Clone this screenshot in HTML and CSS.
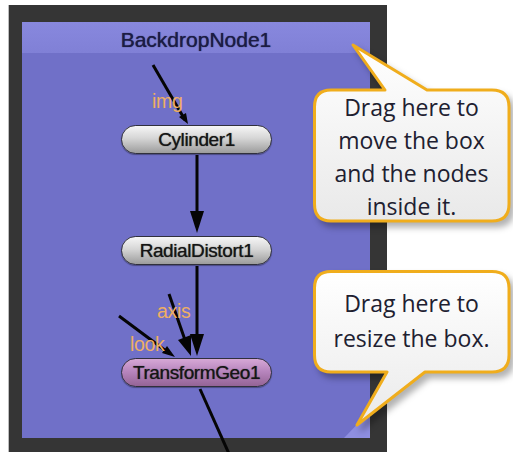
FILE: index.html
```html
<!DOCTYPE html>
<html lang="en">
<head>
  <meta charset="UTF-8">
  <title>Backdrop Node</title>
  <link rel="stylesheet" href="styles.css">
</head>
<body>
  <div class="frame">
    <div class="backdrop">
      <div class="backdrop-title">BackdropNode1</div>
      <div class="backdrop-body">
        <div class="node node-cylinder">Cylinder1</div>
        <div class="node node-radial">RadialDistort1</div>
        <div class="node node-transform">TransformGeo1</div>
      </div>
    </div>
  </div>

  <!-- wires and input labels, page coordinates -->
  <svg class="wires" width="513" height="452" viewBox="0 0 513 452">
    <polygon class="resize-corner" points="344,438 370,411 370,438"/>
    <line x1="153" y1="65" x2="185" y2="120"/>
    <polygon points="179,117 186,113 188,124"/>
    <line x1="197" y1="155" x2="197" y2="214"/>
    <polygon points="190,211 204,211 197,233"/>
    <line x1="197" y1="266" x2="197" y2="336"/>
    <polygon points="190,334 204,334 197,356"/>
    <line x1="169" y1="294" x2="185" y2="340"/>
    <polygon points="178,340 191,335 191,356"/>
    <line x1="119" y1="316" x2="166" y2="351"/>
    <polygon points="162,353 167,346 175,357"/>
    <line x1="200" y1="389" x2="230" y2="456"/>
    <text class="port" x="152" y="108">img</text>
    <text class="port" x="157" y="318">axis</text>
    <text class="port" x="130" y="351">look</text>
  </svg>

  <div class="callout callout-move">
    <svg class="callout-shape" width="197" height="177" viewBox="0 0 197 177">
      <defs>
        <linearGradient id="fillMove" x1="0" y1="0" x2="0" y2="1">
          <stop offset="0" stop-color="#ffffff"/>
          <stop offset="1" stop-color="#e9e9e9"/>
        </linearGradient>
      </defs>
      <path fill="url(#fillMove)" d="M18,45 L72,45 L40,0 L114,45 L179,45 Q196,45 196,62 L196,159 Q196,176 179,176 L18,176 Q1.5,176 1.5,159 L1.5,62 Q1.5,45 18,45 Z"/>
    </svg>
    <div class="callout-text">Drag here to<br>move the box<br>and the nodes<br>inside it.</div>
  </div>

  <div class="callout callout-resize">
    <svg class="callout-shape" width="197" height="156" viewBox="0 0 197 156">
      <defs>
        <linearGradient id="fillResize" x1="0" y1="0" x2="0" y2="1">
          <stop offset="0" stop-color="#ffffff"/>
          <stop offset="1" stop-color="#eaeaea"/>
        </linearGradient>
      </defs>
      <path fill="url(#fillResize)" d="M18,1.5 L179,1.5 Q196,1.5 196,18 L196,85 Q196,102 179,102 L112,102 L44,155 L74,102 L18,102 Q1.5,102 1.5,85 L1.5,18 Q1.5,1.5 18,1.5 Z"/>
    </svg>
    <div class="callout-text">Drag here to<br>resize the box.</div>
  </div>
</body>
</html>
```

FILE: styles.css
```css
body {
  margin: 0;
  width: 513px;
  height: 452px;
  overflow: hidden;
  background: #fff;
  font-family: "Liberation Sans", Arial, sans-serif;
}
.frame {
  margin: 5px 0 0 8px;
  width: 348px;
  height: 416px;
  padding: 17px 17px 14px 13px;
  background: #353535;
  border-left: 1px solid #bdbdbd;
}
.backdrop {
  width: 348px;
  height: 416px;
  background: #7070c8;
  display: flex;
  flex-direction: column;
}
.backdrop-title {
  height: 27px;
  padding-top: 4px;
  line-height: 27px;
  text-align: center;
  font-size: 21px;
  color: #1c1c44;
  text-shadow: 0 0 1px #1c1c44;
  background: linear-gradient(#8888de, #8080d6);
}
.backdrop-body {
  flex: 1;
  position: relative;
}
.node {
  position: absolute;
  z-index: 2;
  left: 99px;
  width: 149px;
  height: 27px;
  line-height: 27px;
  border: 1px solid #30303c;
  border-radius: 15px;
  text-align: center;
  font-size: 19px;
  letter-spacing: -0.4px;
  color: #151515;
  text-shadow: 0 0 1px #333;
  background: linear-gradient(#f6f6f6, #d6d6d6 45%, #9c9c9c);
  box-shadow: 0 1px 1px rgba(0, 0, 0, 0.35);
}
.node-cylinder {
  top: 72px;
}
.node-radial {
  top: 183px;
}
.node-transform {
  top: 305px;
  background: linear-gradient(#d6a8d6, #b886be 45%, #946496);
}
.wires {
  position: absolute;
  top: 0;
  left: 0;
  z-index: 1;
  pointer-events: none;
}
.wires line {
  stroke: #050505;
  stroke-width: 3;
}
.wires polygon {
  fill: #050505;
}
.wires .resize-corner {
  fill: #8e8ee0;
}
.port {
  font-family: "Liberation Sans", Arial, sans-serif;
  font-size: 19.5px;
  fill: #eeae64;
  letter-spacing: -0.3px;
}
.callout {
  position: absolute;
  z-index: 3;
  left: 313px;
  width: 197px;
}
.callout-move {
  top: 45px;
  height: 177px;
}
.callout-resize {
  top: 270px;
  height: 156px;
}
.callout-shape {
  position: absolute;
  top: 0;
  left: 0;
  overflow: visible;
  filter: drop-shadow(4px 5px 3px rgba(0, 0, 0, 0.3));
}
.callout-shape path {
  stroke: #f0ad1c;
  stroke-width: 3;
  stroke-linejoin: round;
}
.callout-text {
  position: relative;
  text-align: center;
  font-family: "Open Sans", sans-serif;
  font-size: 23px;
  color: #202030;
}
.callout-move .callout-text {
  padding-top: 46px;
  line-height: 33px;
}
.callout-resize .callout-text {
  padding-top: 16px;
  line-height: 35px;
}
```
